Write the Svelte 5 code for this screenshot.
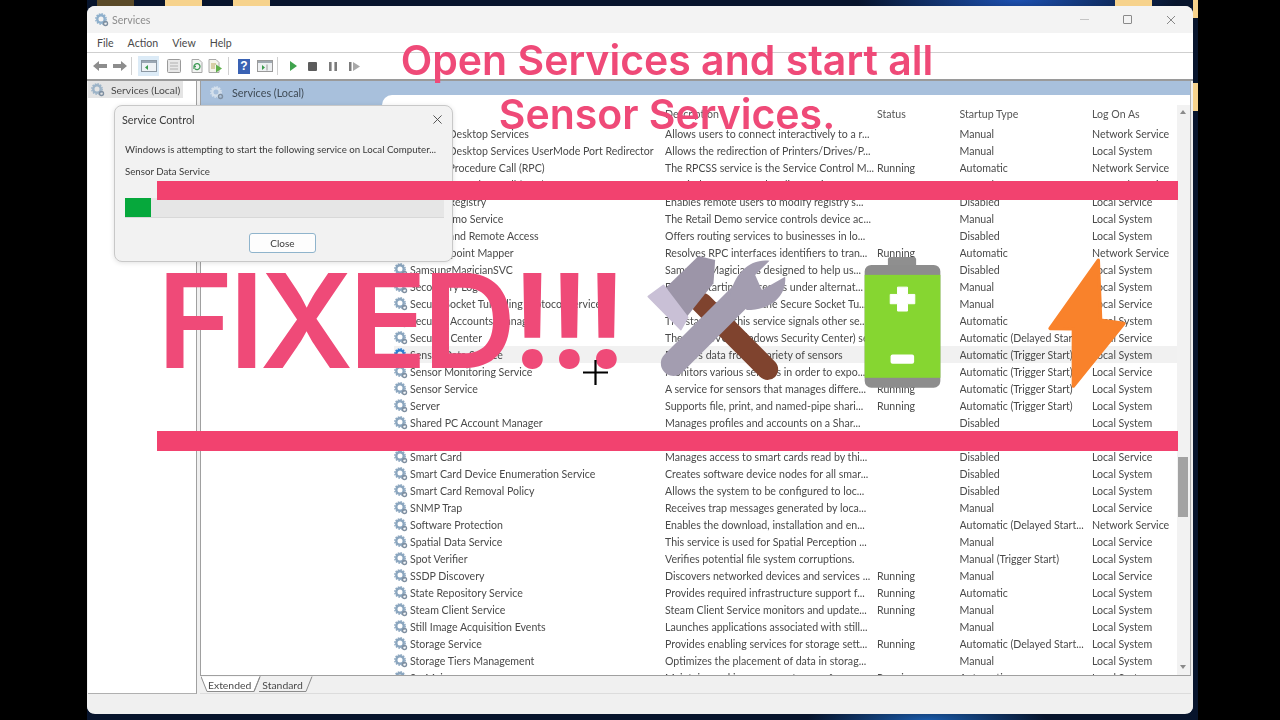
<script>
  const services = [
    ['Remote Desktop Services', 'Allows users to connect interactively to a r...', '', 'Manual', 'Network Service'],
    ['Remote Desktop Services UserMode Port Redirector', 'Allows the redirection of Printers/Drives/P...', '', 'Manual', 'Local System'],
    ['Remote Procedure Call (RPC)', 'The RPCSS service is the Service Control M...', 'Running', 'Automatic', 'Network Service'],
    ['Remote Procedure Call (RPC) Locator', 'In Windows 2003 and earlier versions of W...', '', 'Manual', 'Network Service'],
    ['Remote Registry', 'Enables remote users to modify registry s...', '', 'Disabled', 'Local Service'],
    ['Retail Demo Service', 'The Retail Demo service controls device ac...', '', 'Manual', 'Local System'],
    ['Routing and Remote Access', 'Offers routing services to businesses in lo...', '', 'Disabled', 'Local System'],
    ['RPC Endpoint Mapper', 'Resolves RPC interfaces identifiers to tran...', 'Running', 'Automatic', 'Network Service'],
    ['SamsungMagicianSVC', 'Samsung Magician is designed to help us...', '', 'Disabled', 'Local System'],
    ['Secondary Logon', 'Enables starting processes under alternat...', '', 'Manual', 'Local System'],
    ['Secure Socket Tunneling Protocol Service', 'Provides support for the Secure Socket Tu...', '', 'Manual', 'Local Service'],
    ['Security Accounts Manager', 'The startup of this service signals other se...', '', 'Automatic', 'Local System'],
    ['Security Center', 'The WSCSVC (Windows Security Center) se...', '', 'Automatic (Delayed Start', 'Local Service'],
    ['Sensor Data Service', 'Delivers data from a variety of sensors', '', 'Automatic (Trigger Start)', 'Local System'],
    ['Sensor Monitoring Service', 'Monitors various sensors in order to expo...', '', 'Automatic (Trigger Start)', 'Local Service'],
    ['Sensor Service', 'A service for sensors that manages differe...', 'Running', 'Automatic (Trigger Start)', 'Local System'],
    ['Server', 'Supports file, print, and named-pipe shari...', 'Running', 'Automatic (Trigger Start)', 'Local System'],
    ['Shared PC Account Manager', 'Manages profiles and accounts on a Shar...', '', 'Disabled', 'Local System'],
    ['Shell Hardware Detection', 'Provides notifications for AutoPlay hardw...', 'Running', 'Automatic', 'Local System'],
    ['Smart Card', 'Manages access to smart cards read by thi...', '', 'Disabled', 'Local Service'],
    ['Smart Card Device Enumeration Service', 'Creates software device nodes for all smar...', '', 'Disabled', 'Local System'],
    ['Smart Card Removal Policy', 'Allows the system to be configured to loc...', '', 'Disabled', 'Local System'],
    ['SNMP Trap', 'Receives trap messages generated by loca...', '', 'Manual', 'Local Service'],
    ['Software Protection', 'Enables the download, installation and en...', '', 'Automatic (Delayed Start...', 'Network Service'],
    ['Spatial Data Service', 'This service is used for Spatial Perception ...', '', 'Manual', 'Local Service'],
    ['Spot Verifier', 'Verifies potential file system corruptions.', '', 'Manual (Trigger Start)', 'Local System'],
    ['SSDP Discovery', 'Discovers networked devices and services ...', 'Running', 'Manual', 'Local Service'],
    ['State Repository Service', 'Provides required infrastructure support f...', 'Running', 'Automatic', 'Local System'],
    ['Steam Client Service', 'Steam Client Service monitors and update...', 'Running', 'Manual', 'Local System'],
    ['Still Image Acquisition Events', 'Launches applications associated with still...', '', 'Manual', 'Local System'],
    ['Storage Service', 'Provides enabling services for storage sett...', 'Running', 'Automatic (Delayed Start...', 'Local System'],
    ['Storage Tiers Management', 'Optimizes the placement of data in storag...', '', 'Manual', 'Local System'],
    ['SysMain', 'Maintains and improves system performan...', 'Running', 'Automatic', 'Local System']
  ];
</script>

{#snippet gear(color)}
  <svg class="gear" viewBox="0 0 14 14" width="14" height="14">
    <circle cx="6" cy="6" r="3.7" fill="none" stroke={color} stroke-width="2.4" />
    <circle cx="6" cy="6" r="5.2" fill="none" stroke={color} stroke-width="1.4" stroke-dasharray="1.6 1.1" />
    <circle cx="10.5" cy="10.5" r="2" fill="none" stroke="#7f8fa0" stroke-width="1.4" />
  </svg>
{/snippet}

<div class="screen">
  <div class="wallpaper">
    <div class="desk-icons">
      <span class="desk dark"></span>
      <span class="desk"></span>
      <span class="desk"></span>
      <span class="desk right"></span>
      <span class="desk edge"></span>
      <span class="desk edge low"></span>
    </div>

    <div class="window">
      <div class="titlebar">
        {@render gear('#8fb0cc')}
        <span class="title">Services</span>
        <div class="caption">
          <span class="min"></span>
          <span class="max"></span>
          <svg viewBox="0 0 10 10" width="10" height="10"><path d="M1 1l8 8M9 1l-8 8" stroke="#888" stroke-width="1" /></svg>
        </div>
      </div>

      <div class="menu">
        <span>File</span><span>Action</span><span>View</span><span>Help</span>
      </div>

      <div class="toolbar">
        <svg class="tb t-back" viewBox="0 0 16 14" width="16" height="14"><path d="M1 7l6-5v3h8v4H7v3z" fill="#8d8d8d" /></svg>
        <svg class="tb t-fwd" viewBox="0 0 16 14" width="16" height="14"><path d="M15 7L9 2v3H1v4h8v3z" fill="#8d8d8d" /></svg>
        <i class="sep"></i>
        <span class="tb-on">
          <svg viewBox="0 0 16 14" width="16" height="14"><rect x=".5" y="1.5" width="15" height="11" fill="#eef2f5" stroke="#8c98a3" /><rect x="1" y="2" width="14" height="2" fill="#9aa7b3" /><path d="M7 6v5L4 8.500z" fill="#3b9a4c" /></svg>
        </span>
        <svg class="tb t1" viewBox="0 0 14 14" width="14" height="14"><rect x=".5" y=".5" width="13" height="13" rx="1" fill="#e8e8e8" stroke="#9a9a9a" /><path d="M3 4h8M3 7h8M3 10h8" stroke="#b0b0b0" /></svg>
        <svg class="tb t2" viewBox="0 0 14 14" width="14" height="14"><path d="M2 .5h7l3 3v10H2z" fill="#f2f4f2" stroke="#a8a8a8" /><path d="M4 7.500a3 3 0 1 1 1 2.300M4 10V7.500h2" fill="none" stroke="#3f9a55" stroke-width="1.300" /></svg>
        <svg class="tb t3" viewBox="0 0 15 14" width="15" height="14"><path d="M1 .5h7l3 3v10H1z" fill="#f4f4ec" stroke="#a8a8a8" /><path d="M3 5h5M3 7h4M3 9h4" stroke="#b8a860" /><path d="M8 5.500l6 4-6 4z" fill="#5fb04a" /></svg>
        <i class="sep s2"></i>
        <span class="help">?</span>
        <svg class="tb t4" viewBox="0 0 16 14" width="16" height="14"><rect x=".5" y="1.500" width="15" height="11" fill="#eef0f2" stroke="#9a9a9a" /><rect x="1" y="2" width="14" height="2" fill="#a0a8b0" /><path d="M5 6v5l3-2.500z" fill="#3b9a4c" /><path d="M10 5.500v6" stroke="#9a9a9a" /></svg>
        <i class="sep s3"></i>
        <svg class="tb t5" viewBox="0 0 8 10" width="8" height="10"><path d="M1 0l7 5-7 5z" fill="#3fa34d" /></svg>
        <svg class="tb t6" viewBox="0 0 9 9" width="9" height="9"><rect width="9" height="9" rx="1" fill="#5c5c5c" /></svg>
        <svg class="tb t7" viewBox="0 0 8 9" width="8" height="9"><path d="M0 0h2.600v9H0zM5.400 0H8v9H5.400z" fill="#7b7b7b" /></svg>
        <svg class="tb t8" viewBox="0 0 11 9" width="11" height="9"><path d="M0 0h2.500v9H0z" fill="#7b7b7b" /><path d="M4 0l7 4.500L4 9z" fill="#a8a8a8" /></svg>
      </div>

      <div class="body">
        <aside class="tree">
          <div class="tree-item">
            {@render gear('#9db4c8')}
            <span>Services (Local)</span>
          </div>
        </aside>

        <section class="pane">
          <div class="column-area">
            <div class="pane-head">
              <div class="head-title">
                {@render gear('#d5e0ec')}
                <span>Services (Local)</span>
              </div>
              <div class="head-tab"></div>
            </div>

            <div class="pane-main">
              <div class="list">
                <div class="row header">
                  <span class="name">Name</span>
                  <span class="desc">Description</span>
                  <span>Status</span>
                  <span>Startup Type</span>
                  <span>Log On As</span>
                </div>
                <div class="rows">
                  {#each services as s}
                    <div class="row" class:selected={s[0] === 'Sensor Data Service'}>
                      <span class="name">
                        {@render gear(s[0] === 'Sensor Data Service' ? '#2f7fd0' : '#8ba6bf')}
                        <span>{s[0]}</span>
                      </span>
                      <span class="desc">{s[1]}</span>
                      <span>{s[2]}</span>
                      <span>{s[3]}</span>
                      <span>{s[4]}</span>
                    </div>
                  {/each}
                </div>
              </div>
              <div class="scrollbar">
                <span class="arrow up"></span>
                <span class="thumb"></span>
                <span class="arrow down"></span>
              </div>
            </div>
          </div>

          <div class="tabs">
            <svg class="tab-shape" viewBox="0 0 112 17" width="112" height="17">
              <path d="M0 .5l6 15h47l6-15" fill="#fff" stroke="#8c8c8c" />
              <path d="M53 15.500l6-15M58 15.500h47l6-15" fill="none" stroke="#8c8c8c" />
            </svg>
            <span class="tab-a">Extended</span>
            <span class="tab-b">Standard</span>
          </div>
        </section>
      </div>

      <div class="statusbar"></div>
    </div>
  </div>

  <!-- Overlays from the video thumbnail -->
  <div class="dialog">
    <div class="dialog-title">
      <span>Service Control</span>
      <svg viewBox="0 0 10 10" width="9" height="9"><path d="M.5.5l9 9M9.500.5l-9 9" stroke="#444" stroke-width="1" /></svg>
    </div>
    <div class="dialog-body">
      <p>Windows is attempting to start the following service on Local Computer...</p>
      <p class="svc">Sensor Data Service</p>
      <div class="progress"><div class="progress-fill" style="width: 8%"></div></div>
      <div class="dialog-actions"><button>Close</button></div>
    </div>
  </div>

  <div class="bar bar-top"></div>
  <div class="bar bar-bottom"></div>

  <div class="heading">Open Services and start all<br />Sensor Services.</div>
  <div class="fixed">FIXED!!!</div>

  <svg class="cursor" viewBox="0 0 25 25" width="25" height="25"><path d="M12.500 0v25M0 12.500h25" stroke="#000" stroke-width="2.200" /></svg>

  <svg class="tools" viewBox="0 0 500 510" width="167" height="170">
    <path d="M215 190L412 388" stroke="#7f432e" stroke-width="64" stroke-linecap="round" />
    <path d="M100 150L205 48 255 60 250 130 170 230z" fill="#9c95a8" />
    <path d="M55 170L100 137 172 232 152 268z" fill="#c9c0d6" stroke="#c9c0d6" stroke-width="6" stroke-linejoin="round" />
    <path d="M130 370L330 170" stroke="#a39db0" stroke-width="76" stroke-linecap="round" />
    <path d="M300 170C310 100 360 55 418 62L375 105 395 150 465 110C470 170 420 210 350 210z" fill="#a39db0" />
  </svg>

  <svg class="battery" viewBox="0 0 250 420" width="83" height="140">
    <path d="M72 22a8 8 0 0 1 8-8h69a8 8 0 0 1 8 8v20H72z" fill="#8f8f8f" />
    <rect x="2" y="38" width="228" height="370" rx="20" fill="#8d8d8d" />
    <rect x="2" y="68" width="228" height="310" fill="#86d631" />
    <path d="M101 105h30v22h22v28h-22v22h-30v-22H79v-28h22z" fill="#fff" stroke="#fff" stroke-width="3" stroke-linejoin="round" />
    <rect x="80" y="308" width="71" height="28" rx="6" fill="#fff" />
  </svg>

  <svg class="bolt" viewBox="0 0 300 500" width="100" height="167">
    <path d="M205 60L60 265 130 266 130 438 282 250 212 240z" fill="#f9822b" stroke="#f9822b" stroke-width="10" stroke-linejoin="round" />
  </svg>
</div>

<style>
  :global(body) {
    margin: 0;
    background: #000;
  }

  .screen {
    position: relative;
    width: 1280px;
    height: 720px;
    overflow: hidden;
    background: #000;
    font-family: Lato, 'Noto Sans', sans-serif;
  }

  .wallpaper {
    position: relative;
    width: 1111px;
    height: 720px;
    margin-left: 87px;
    padding-top: 6px;
    box-sizing: border-box;
    background:
      radial-gradient(ellipse 160px 30px at 930px 0, #1c50b0, transparent),
      radial-gradient(ellipse 120px 20px at 840px 720px, #1a5aa8, transparent),
      #07142c;
  }

  .desk-icons {
    position: absolute;
    top: 0;
    left: 0;
    width: 100%;
    height: 100%;
  }

  .desk {
    position: absolute;
    top: 0;
    left: 146px;
    width: 37px;
    height: 6px;
    background: #f6d28c;
  }

  .desk:nth-child(3) {
    left: 78px;
  }

  .desk.dark {
    left: 10px;
    background: #5a4a28;
  }

  .desk.right {
    left: 1028px;
  }

  .desk.edge {
    left: 1106px;
    width: 5px;
    height: 18px;
  }

  .desk.low {
    top: 83px;
    height: 28px;
  }

  .window {
    position: relative;
    display: flex;
    flex-direction: column;
    width: 1106px;
    height: 708px;
    border-radius: 8px 8px 8px 8px;
    background: #f0f0f0;
    overflow: hidden;
    color: #4a4a4a;
    font-size: 10.6px;
    filter: blur(0.3px);
  }

  .titlebar {
    display: flex;
    align-items: center;
    gap: 3px;
    height: 27px;
    padding-left: 8px;
    background: #f3f3f3;
    color: #8c8c8c;
    font-size: 10.6px;
  }

  .caption {
    display: flex;
    align-items: center;
    gap: 34px;
    margin-left: auto;
    padding-right: 17px;
  }

  .min {
    width: 9px;
    border-top: 1px solid #c4c4c4;
  }

  .max {
    width: 7px;
    height: 7px;
    border: 1px solid #8a8a8a;
    border-radius: 1px;
  }

  .menu {
    display: flex;
    align-items: center;
    gap: 14px;
    height: 19px;
    padding-left: 10px;
    background: #fff;
    border-bottom: 1px solid #cfcfcf;
    font-size: 10.6px;
  }

  .toolbar {
    display: flex;
    align-items: center;
    height: 26px;
    padding-left: 5px;
    background: #fff;
    border-bottom: 2px solid #9a9a9a;
  }

  .tb {
    flex: none;
    margin-right: 5px;
  }

  .t-back { margin-right: 4px; }
  .t-fwd { margin-right: 3px; }

  .sep {
    width: 1px;
    height: 18px;
    margin: 0 5px 0 0;
    background: #d0d0d0;
  }

  .tb-on {
    display: flex;
    align-items: center;
    justify-content: center;
    width: 21px;
    height: 20px;
    margin: 0 8px 0 1px;
    background: #dcebf7;
  }

  .t1 { margin-right: 9px; }
  .t2 { margin-right: 4px; }
  .t3 { margin-right: 5px; }
  .s2 { margin-right: 9px; }

  .help {
    width: 12px;
    height: 15px;
    margin-right: 7px;
    background: #3a62b4;
    color: #fff;
    font: bold 12px/15px 'Liberation Sans', sans-serif;
    text-align: center;
  }

  .t4 { margin-right: 4px; }
  .s3 { margin-right: 11px; }
  .t5 { margin-right: 11px; }
  .t6 { margin-right: 12px; }
  .t7 { margin-right: 12px; }

  .body {
    display: flex;
    height: 613px;
  }

  .tree {
    flex: none;
    width: 108px;
    height: 612px;
    margin: 0 3px 0 1px;
    background: #fff;
    border-right: 1px solid #a0a0a0;
    border-bottom: 1px solid #b0b0b0;
    box-sizing: content-box;
  }

  .tree-item {
    display: inline-flex;
    align-items: center;
    gap: 6px;
    height: 17px;
    padding: 0 3px;
    background: #e4e4e4;
    font-size: 10.4px;
  }

  .pane {
    display: flex;
    flex-direction: column;
    flex: 1;
    min-width: 0;
    margin-right: 2px;
  }

  .column-area {
    height: 595px;
    background: #fff;
    border: 1px solid #a0a0a0;
    border-top: none;
    border-right: 1px solid #b0b0b0;
    overflow: hidden;
  }

  .pane-head {
    position: relative;
    height: 24px;
    background: #a8c0dc;
  }

  .head-title {
    display: flex;
    align-items: center;
    gap: 8px;
    height: 23px;
    padding-left: 9px;
    font-size: 10.8px;
    color: #3f4a55;
  }

  .head-tab {
    position: absolute;
    left: 181px;
    right: 0;
    top: 14px;
    bottom: 0;
    background: #fff;
    border-top-left-radius: 12px;
  }

  .pane-main {
    display: flex;
    padding-left: 193px;
  }

  .list {
    flex: 1;
    min-width: 0;
  }

  .row {
    display: grid;
    grid-template-columns: 271px 212px 82.5px 132.5px 1fr;
    height: 17px;
    align-items: center;
    white-space: nowrap;
  }

  .row > span {
    overflow: hidden;
  }

  .row.header {
    height: 18px;
    padding-bottom: 2px;
    color: #555;
  }

  .row.header .name {
    padding-left: 16px;
  }

  .row.selected {
    background: #f1f1f1;
  }

  .name {
    display: flex;
    align-items: center;
    gap: 2px;
  }

  .gear {
    flex: none;
  }

  .scrollbar {
    position: relative;
    flex: none;
    width: 13px;
    margin-left: 0;
    background: #f2f2f2;
  }

  .thumb {
    position: absolute;
    left: 1px;
    top: 352px;
    width: 10px;
    height: 60px;
    background: #a3a3a3;
  }

  .arrow {
    position: absolute;
    left: 3px;
    border-left: 3px solid transparent;
    border-right: 3px solid transparent;
  }

  .up {
    top: 5px;
    border-bottom: 4px solid #8a8a8a;
  }

  .down {
    top: 560px;
    border-top: 4px solid #8a8a8a;
  }

  .rows {
    height: 550px;
    overflow: hidden;
  }

  .tabs {
    position: relative;
    display: flex;
    align-items: center;
    height: 17px;
    padding-left: 8px;
    gap: 11px;
    font-size: 10.4px;
    border-bottom: 1px solid #dcdcdc;
  }

  .tab-shape {
    position: absolute;
    left: 1px;
    top: 0;
  }

  .tab-a,
  .tab-b {
    position: relative;
  }

  .statusbar {
    height: 19px;
    background: #f0f0f0;
  }

  /* Overlays */
  .dialog {
    position: absolute;
    left: 114px;
    top: 105px;
    width: 339px;
    height: 157px;
    box-sizing: border-box;
    border: 1px solid #c8c8c8;
    border-radius: 8px;
    background: #f2f2f2;
    color: #3a3a3a;
    box-shadow: 0 1px 5px rgba(0, 0, 0, 0.12);
    filter: blur(0.25px);
  }

  .dialog-title {
    display: flex;
    align-items: center;
    justify-content: space-between;
    height: 27px;
    padding: 0 10px 0 7px;
    font-size: 10.8px;
  }

  .dialog-body {
    padding: 9px 8px 0 10px;
    font-size: 9.7px;
  }

  .dialog-body p {
    margin: 0;
    height: 22px;
    line-height: 14px;
    white-space: nowrap;
  }

  .svc {
    height: 22px !important;
    margin-bottom: 12px !important;
  }

  .progress {
    height: 20px;
    background: #e6e6e6;
    border-bottom: 1px solid #d8d8d8;
    box-sizing: border-box;
  }

  .progress-fill {
    height: 100%;
    background: #06a83c;
  }

  .dialog-actions {
    display: flex;
    justify-content: center;
    padding-top: 15px;
    padding-right: 4px;
  }

  button {
    width: 67px;
    height: 20px;
    padding: 0;
    border: 1px solid #8fb4cc;
    border-radius: 3px;
    background: #fdfdfd;
    color: #3a3a3a;
    font: 10px Lato, sans-serif;
  }

  .bar {
    position: absolute;
    left: 157px;
    width: 1021px;
    background: #f2426f;
  }

  .bar-top {
    top: 181px;
    height: 19px;
  }

  .bar-bottom {
    top: 431px;
    height: 20px;
  }

  .heading {
    position: absolute;
    left: 390px;
    top: 33px;
    width: 554px;
    color: #ef4a78;
    font: 600 41px/54px Inter, sans-serif;
    text-align: center;
  }

  .fixed {
    position: absolute;
    left: 157px;
    top: 251px;
    color: #ef4a78;
    font: 600 130px/140px Inter, sans-serif;
    letter-spacing: -4.8px;
    white-space: nowrap;
  }

  .cursor {
    position: absolute;
    left: 583px;
    top: 360px;
  }

  .tools {
    position: absolute;
    left: 630px;
    top: 240px;
  }

  .battery {
    position: absolute;
    left: 864px;
    top: 252px;
  }

  .bolt {
    position: absolute;
    left: 1030px;
    top: 240px;
  }
</style>
